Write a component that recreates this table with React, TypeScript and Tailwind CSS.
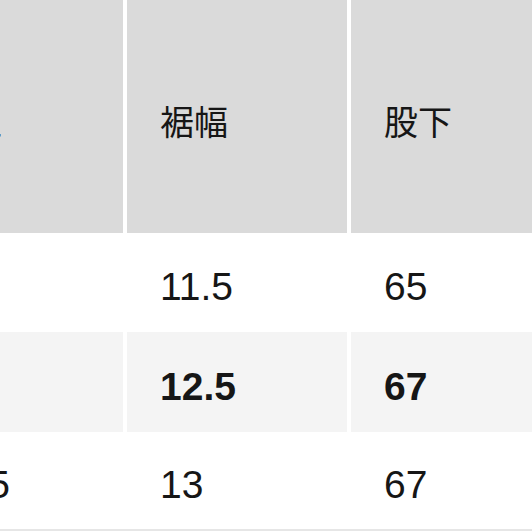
import React from 'react';

type RowProps = {
  cells: string[];
  height: string;
  bg: string;
  bold?: boolean;
  header?: boolean;
};

const pads = ['pl-[34px]', 'pl-[33px]', 'pl-[33px]'];

function Row({ cells, height, bg, bold, header }: RowProps) {
  return (
    <div className={`grid grid-cols-[223px_220px_1fr] gap-x-[4px] ${height}`}>
      {cells.map((c, i) => (
        <div
          key={i}
          className={`flex items-center pt-2 ${pads[i]} ${bg} ${
            header
              ? "text-[34px] font-normal [font-family:'Noto_Sans_CJK_JP',sans-serif]"
              : "text-[39px] leading-none [font-family:'Liberation_Sans',Arial,sans-serif]"
          } ${bold ? 'font-bold' : ''} text-[#161616] whitespace-nowrap`}
        >
          {c}
        </div>
      ))}
    </div>
  );
}

export default function App() {
  return (
    <div className="w-[532px] h-[532px] overflow-hidden bg-white">
      <div className="ml-[-100px] w-[632px] flex flex-col">
        {/* Header */}
        <Row header cells={['股上', '裾幅', '股下']} height="h-[233px]" bg="bg-[#dadada]" />

        {/* Body rows */}
        <Row cells={['31', '11.5', '65']} height="h-[99px]" bg="bg-white" />
        <Row bold cells={['32', '12.5', '67']} height="h-[100px]" bg="bg-[#f4f4f4]" />
        <div className="border-b-2 border-[#e6e6e6]">
          <Row cells={['33.5', '13', '67']} height="h-[97px]" bg="bg-white" />
        </div>
      </div>
    </div>
  );
}
